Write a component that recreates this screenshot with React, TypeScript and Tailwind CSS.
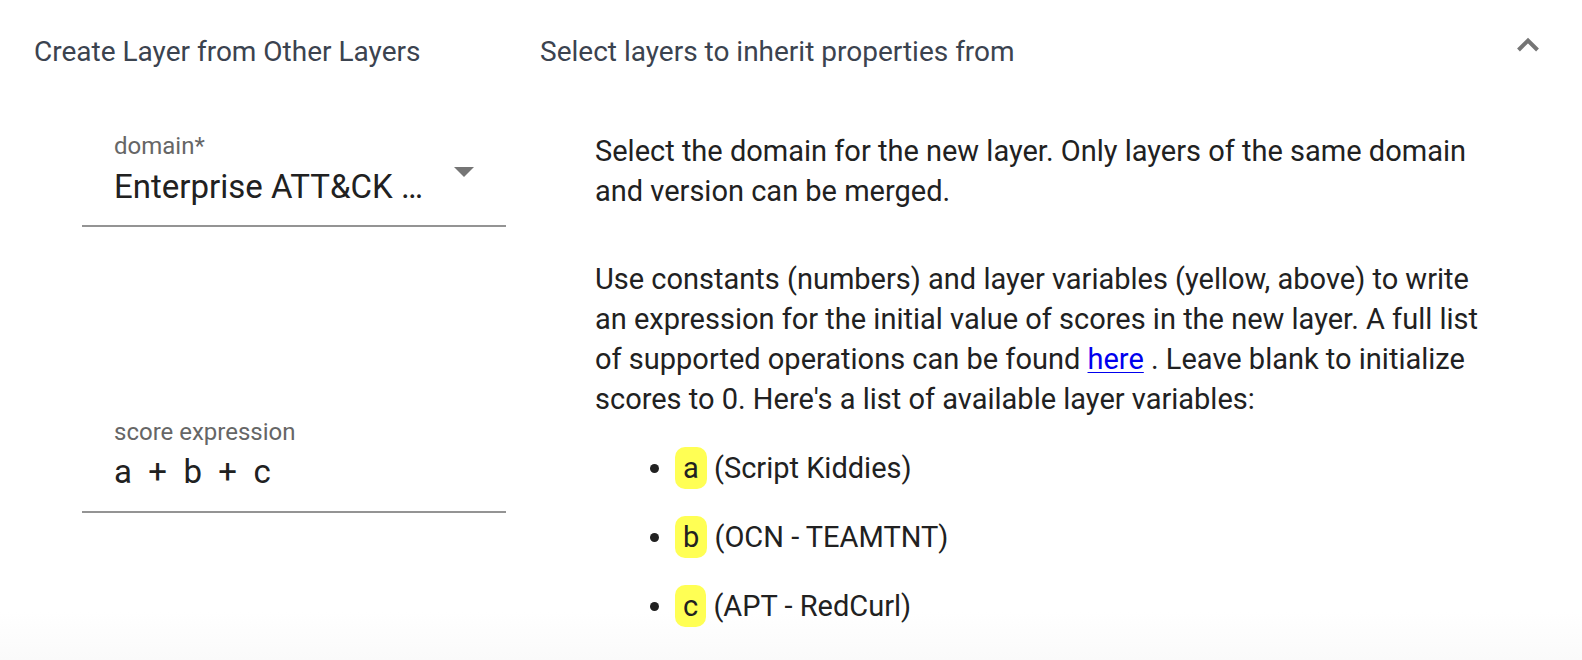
const variables = [
  { name: "a", layer: "Script Kiddies" },
  { name: "b", layer: "OCN - TEAMTNT" },
  { name: "c", layer: "APT - RedCurl" },
];

export default function App() {
  return (
    <main className="flex min-h-screen flex-col bg-white bg-linear-to-t from-[#fafafa] to-white to-[48px] font-['Roboto',sans-serif] text-[#212121]">
      <h2>
        <button type="button" aria-expanded="true" className="flex w-full items-start pr-[42px] pl-[34px] pt-8 text-left text-[28px] leading-10 text-[#3b434f]">
          <span className="w-[506px] shrink-0">Create Layer from Other Layers</span>
          <span className="grow">Select layers to inherit properties from</span>
          <svg viewBox="0 0 24 16" className="mt-1 h-4 w-6" fill="none" stroke="#757575" strokeWidth="4" aria-hidden="true">
            <path d="M2.500 14 12 4.500l9.500 9.500" />
          </svg>
        </button>
      </h2>
      <div className="flex pt-[59px] pr-20 pl-[82px]">
        <div className="flex w-[424px] shrink-0 flex-col gap-[190px]">
          <div className="relative border-b-2 border-[#949494] px-8 pb-[15px]">
            <label htmlFor="domain" className="block text-2xl leading-[31px] text-[#666]">domain*</label>
            <select id="domain" className="block h-12 w-[322px] appearance-none truncate text-[33px]">
              <option>Enterprise ATT&amp;CK MITRE ATT&amp;CK v13</option>
            </select>
            <svg viewBox="0 0 20 10" className="pointer-events-none absolute top-9 right-8 h-[10px] w-5" fill="#757575" aria-hidden="true">
              <path d="M0 0h20L10 10z" />
            </svg>
          </div>
          <div className="border-b-2 border-[#949494] px-8 pb-[15px]">
            <label htmlFor="score" className="block text-2xl leading-[31px] text-[#666]">score expression</label>
            <input id="score" defaultValue="a  +  b  +  c" className="block h-12 w-full text-[33px]" />
          </div>
        </div>
        <div className="ml-[89px] min-w-0 grow text-[29px] leading-10">
          <p>Select the domain for the new layer. Only layers of the same domain and version can be merged.</p>
          <p className="mt-12">
            Use constants (numbers) and layer variables (yellow, above) to write an expression for the initial value of scores in the new layer. A full list of supported operations can be found{" "}
            <a href="#operations" className="text-[#0000ee] underline decoration-1 underline-offset-3">here</a>
            {" "}. Leave blank to initialize scores to 0. Here's a list of available layer variables:
          </p>
          <ul className="mt-[29px] list-disc space-y-7 pl-20 leading-[41px]">
            {variables.map((v) => (
              <li key={v.name}>
                <span className="rounded-[10px] bg-[#ffff54] px-2 py-1">{v.name}</span> ({v.layer})
              </li>
            ))}
          </ul>
        </div>
      </div>
    </main>
  );
}
